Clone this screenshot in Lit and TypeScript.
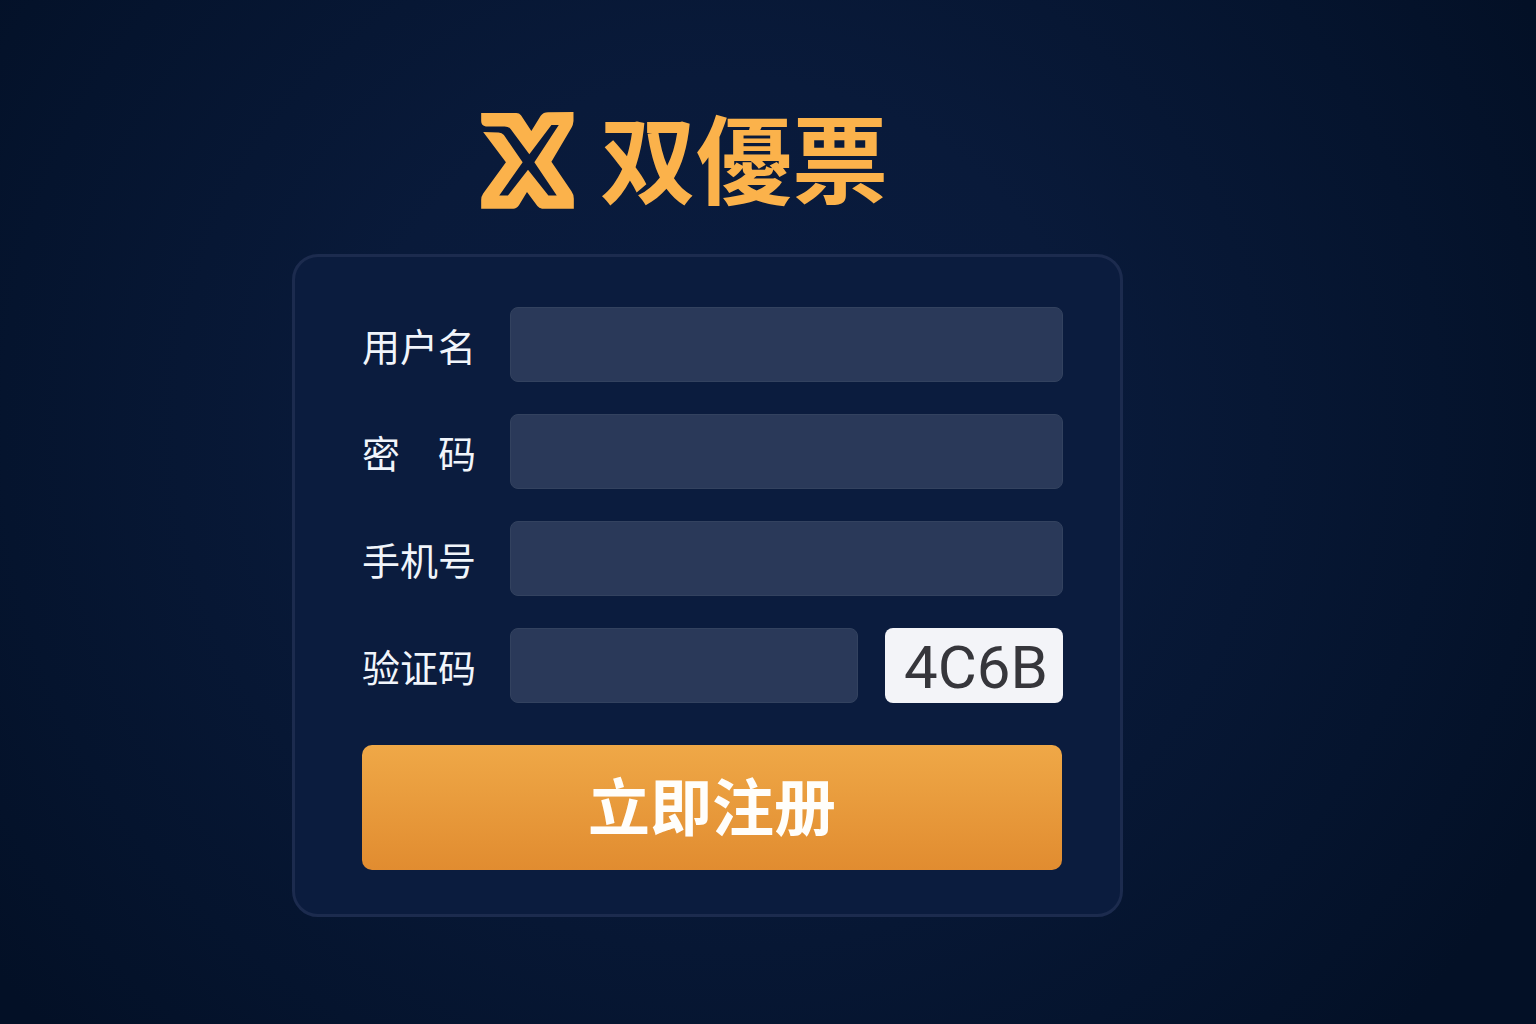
import { LitElement, css, html } from "lit";
import { customElement } from "lit/decorators.js";

interface Field {
  id: string;
  label: string;
  type: string;
  autocomplete: string;
}

const FIELDS: Field[] = [
  { id: "username", label: "用户名", type: "text", autocomplete: "username" },
  { id: "password", label: "密　码", type: "password", autocomplete: "new-password" },
  { id: "phone", label: "手机号", type: "tel", autocomplete: "tel" },
];

@customElement("brand-logo")
export class BrandLogo extends LitElement {
  static styles = css`
    :host {
      display: flex;
      align-items: flex-start;
      gap: 26px;
      color: #fbb24b;
    }
    .mark {
      display: block;
      width: 93px;
      height: 97px;
      fill: currentColor;
    }
    .name {
      margin: 0;
      font: 700 96px/86px "Noto Sans CJK SC", sans-serif;
    }
  `;

  render() {
    return html`
      <svg class="mark" viewBox="36 37 277 290" aria-hidden="true">
        <path
          d="M36 40H141Q150 40 155 47L186 94L214 48Q222 38 236 38L312 37V64Q311 76 306 84L246 186L306 274Q313 284 313 296V326H218Q209 325 204 318L173 276L149 316Q142 326 132 326H36V300Q36 290 42 281L110 187L42 97L88 98Q98 98 104 106L160 187L90 287H116L176 210L237 287H262L195 187L268 76H246L180 163L124 88Q118 80 106 80H50Q36 78 36 64Z"
        />
      </svg>
      <h1 class="name">双優票</h1>
    `;
  }
}

@customElement("register-form")
export class RegisterForm extends LitElement {
  static styles = css`
    :host {
      display: block;
      box-sizing: border-box;
      width: 100%;
      max-width: 831px;
      padding: 50px 57px 44px 67px;
      border: 3px solid #1c2b4e;
      border-radius: 26px;
      background: #0b1c3e;
      font-family: "Noto Sans CJK SC", sans-serif;
    }
    .form {
      display: flex;
      flex-direction: column;
      gap: 32px;
    }
    .row {
      display: flex;
      align-items: center;
    }
    .label {
      flex: 0 0 148px;
      font-size: 38px;
      line-height: 48px;
      color: #f1f5fb;
      white-space: nowrap;
    }
    .input {
      flex: 1;
      min-width: 0;
      box-sizing: border-box;
      height: 75px;
      padding: 0 20px;
      border: 1px solid #33425f;
      border-radius: 8px;
      background: #2a3959;
      color: #f1f5fb;
      font: 32px/40px "Noto Sans CJK SC", sans-serif;
    }
    .captcha {
      box-sizing: border-box;
      flex: 0 0 178px;
      height: 75px;
      margin-left: 27px;
      padding: 4px 0 0 4px;
      border: 0;
      border-radius: 8px;
      background: #f3f4f8;
      color: #36363b;
      font: 60px/71px Roboto, "Liberation Sans", sans-serif;
      text-align: center;
      cursor: pointer;
    }
    .submit {
      box-sizing: border-box;
      height: 125px;
      margin: 10px 1px 0 0;
      padding: 0 0 8px;
      border: 0;
      border-radius: 10px;
      background: linear-gradient(#efa847, #e18c30);
      color: #fffefb;
      font: 700 62px/80px "Noto Sans CJK SC", sans-serif;
      cursor: pointer;
    }
    .input:focus-visible,
    .captcha:focus-visible,
    .submit:focus-visible {
      outline: 3px solid #fbd08c;
      outline-offset: 2px;
    }
  `;

  private onSubmit(event: Event) {
    event.preventDefault();
  }

  render() {
    return html`
      <form class="form" @submit=${this.onSubmit}>
        ${FIELDS.map(
          (field) => html`
            <div class="row">
              <label class="label" for=${field.id}>${field.label}</label>
              <input
                class="input"
                id=${field.id}
                name=${field.id}
                type=${field.type}
                autocomplete=${field.autocomplete}
              />
            </div>
          `,
        )}
        <div class="row">
          <label class="label" for="code">验证码</label>
          <input class="input" id="code" name="code" type="text" autocomplete="off" />
          <button class="captcha" type="button">4C6B</button>
        </div>
        <button class="submit" type="submit">立即注册</button>
      </form>
    `;
  }
}

@customElement("app-root")
export class AppRoot extends LitElement {
  static styles = css`
    :host {
      display: block;
    }
    .page {
      box-sizing: border-box;
      min-height: 100vh;
      padding: 112px 121px 64px 0;
      display: flex;
      flex-direction: column;
      align-items: center;
      gap: 45px;
      background: radial-gradient(ellipse 60% 86% at 47% 42%, #0a1c40 0%, #091a3a 40%, #05142e 78%, #031026 100%);
    }
    .brand {
      margin-right: 46px;
    }
  `;

  render() {
    return html`
      <main class="page">
        <brand-logo class="brand"></brand-logo>
        <register-form></register-form>
      </main>
    `;
  }
}
